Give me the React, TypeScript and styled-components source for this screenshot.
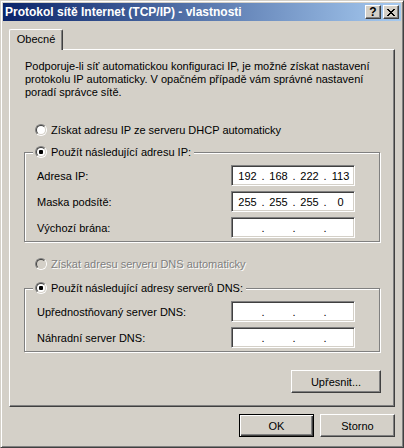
import React from "react";
import styled, { createGlobalStyle } from "styled-components";

const GlobalStyle = createGlobalStyle`
  html, body { margin: 0; padding: 0; background: #d4d0c8; }
  body {
    font-family: "Liberation Sans", Arial, sans-serif;
    font-size: 11px;
    color: #000;
  }
  * { box-sizing: border-box; }
`;

const Window = styled.div`
  width: 404px;
  height: 448px;
  display: flex;
  flex-direction: column;
  background: #d4d0c8;
  border: 1px solid;
  border-color: #d4d0c8 #404040 #404040 #d4d0c8;
  box-shadow: inset 1px 1px 0 #fff, inset -1px -1px 0 #808080;
  padding: 2px;
`;

const TitleBar = styled.div`
  height: 18px;
  display: flex;
  align-items: center;
  gap: 2px;
  padding: 0 2px 0 2px;
  background: linear-gradient(to right, #0a246a 0%, #a6caf0 100%);
`;

const Title = styled.div`
  flex: 1;
  color: #fff;
  font-weight: bold;
  font-size: 12px;
  white-space: nowrap;
  line-height: 18px;
`;

const CaptionButton = styled.div`
  width: 16px;
  height: 14px;
  display: flex;
  align-items: center;
  justify-content: center;
  background: #d4d0c8;
  border: 1px solid;
  border-color: #fff #404040 #404040 #fff;
  box-shadow: inset -1px -1px 0 #808080;
  font-weight: bold;
  font-size: 12px;
  line-height: 12px;
  color: #000;
`;

const Body = styled.div`
  flex: 1;
  display: flex;
  flex-direction: column;
  padding: 8px 6px 0 6px;
`;

const TabStrip = styled.div`
  display: flex;
`;

const Tab = styled.div`
  position: relative;
  z-index: 1;
  width: 54px;
  height: 21px;
  margin-bottom: -1px;
  display: flex;
  align-items: center;
  justify-content: center;
  padding-bottom: 2px;
  background: #d4d0c8;
  border-top: 1px solid #fff;
  border-left: 1px solid #fff;
  border-right: 1px solid #404040;
  border-radius: 2px 2px 0 0;
  box-shadow: inset -1px 0 0 #808080;
`;

const Panel = styled.div`
  display: flex;
  flex-direction: column;
  border: 1px solid;
  border-color: #fff #404040 #404040 #fff;
  box-shadow: inset -1px -1px 0 #808080;
  padding: 10px 13px 13px 14px;
`;

const Paragraph = styled.p`
  margin: 0 0 0 1px;
  line-height: 13px;
`;

const RadioRow = styled.div<{ $top: number; $disabled?: boolean }>`
  display: flex;
  align-items: center;
  height: 14px;
  margin-top: ${(p) => p.$top}px;
  margin-left: 11px;
  color: ${(p) => (p.$disabled ? "#808080" : "#000")};
  text-shadow: ${(p) => (p.$disabled ? "1px 1px 0 #fff" : "none")};
`;

const RadioOuter = styled.span`
  width: 12px;
  height: 12px;
  margin-right: 4px;
  flex: none;
  border-radius: 50%;
  border: 1px solid;
  border-color: #808080 #fff #fff #808080;
  display: flex;
`;

const RadioInner = styled.span<{ $disabled?: boolean }>`
  flex: 1;
  border-radius: 50%;
  border: 1px solid;
  border-color: #404040 #d4d0c8 #d4d0c8 #404040;
  background: ${(p) => (p.$disabled ? "#d4d0c8" : "#fff")};
  display: flex;
  align-items: center;
  justify-content: center;
`;

const RadioDot = styled.span`
  width: 4px;
  height: 4px;
  border-radius: 1px;
  background: #000;
`;

const Group = styled.div<{ $top: number }>`
  position: relative;
  margin-top: ${(p) => p.$top}px;
  margin-right: 1px;
  border: 1px solid #808080;
  box-shadow: 1px 1px 0 #fff, inset 1px 1px 0 #fff;
  padding: 12px 24px 3px 12px;
  display: flex;
  flex-direction: column;
  gap: 5px;
`;

const Legend = styled.div`
  position: absolute;
  top: -8px;
  left: 8px;
  height: 14px;
  display: flex;
  align-items: center;
  padding: 0 3px 0 2px;
  background: #d4d0c8;
`;

const FieldRow = styled.div`
  display: flex;
  align-items: center;
  height: 21px;
`;

const Label = styled.span`
  flex: 1;
`;

const IpBox = styled.div`
  width: 124px;
  height: 21px;
  display: flex;
  align-items: center;
  padding-left: 3px;
  overflow: hidden;
  background: #fff;
  border: 1px solid;
  border-color: #808080 #fff #fff #808080;
  box-shadow: inset 1px 1px 0 #404040, inset -1px -1px 0 #d4d0c8;
`;

const Octet = styled.span`
  width: 25px;
  flex: none;
  text-align: center;
`;

const Dot = styled.span`
  width: 6px;
  flex: none;
  text-align: center;
`;

const Button = styled.div<{ $width: number; $default?: boolean }>`
  width: ${(p) => p.$width}px;
  height: 23px;
  display: flex;
  align-items: center;
  justify-content: center;
  background: #d4d0c8;
  border: 1px solid;
  border-color: ${(p) => (p.$default ? "#000" : "#fff #404040 #404040 #fff")};
  box-shadow: ${(p) =>
    p.$default
      ? "inset 1px 1px 0 #fff, inset -1px -1px 0 #404040, inset -2px -2px 0 #808080"
      : "inset -1px -1px 0 #808080"};
`;

const AdvancedButton = styled(Button)`
  align-self: flex-end;
  margin-top: 18px;
`;

const ButtonRow = styled.div`
  display: flex;
  justify-content: flex-end;
  gap: 6px;
  margin-top: 7px;
`;

function Radio({ checked, disabled }: { checked?: boolean; disabled?: boolean }) {
  return (
    <RadioOuter>
      <RadioInner $disabled={disabled}>{checked && <RadioDot />}</RadioInner>
    </RadioOuter>
  );
}

function IpField({ value }: { value?: string[] }) {
  const parts = value ?? ["", "", "", ""];
  return (
    <IpBox>
      {parts.map((p, i) => (
        <React.Fragment key={i}>
          <Octet>{p}</Octet>
          {i < 3 && <Dot>.</Dot>}
        </React.Fragment>
      ))}
    </IpBox>
  );
}

function CloseGlyph() {
  const px: [number, number][] = [
    [0, 0], [1, 0], [6, 0], [7, 0],
    [1, 1], [2, 1], [5, 1], [6, 1],
    [2, 2], [3, 2], [4, 2], [5, 2],
    [3, 3], [4, 3],
    [2, 4], [3, 4], [4, 4], [5, 4],
    [1, 5], [2, 5], [5, 5], [6, 5],
    [0, 6], [1, 6], [6, 6], [7, 6],
  ];
  const d = px.map(([x, y]) => `M${x} ${y}h1v1h-1z`).join("");
  return (
    <svg width="8" height="7" viewBox="0 0 8 7" shapeRendering="crispEdges">
      <path d={d} fill="#000" />
    </svg>
  );
}

export default function App() {
  return (
    <>
      <GlobalStyle />
      <Window>
        <TitleBar>
          <Title>Protokol sítě Internet (TCP/IP) - vlastnosti</Title>
          <CaptionButton>?</CaptionButton>
          <CaptionButton>
            <CloseGlyph />
          </CaptionButton>
        </TitleBar>
        <Body>
          <TabStrip>
            <Tab>Obecné</Tab>
          </TabStrip>
          <Panel>
            <Paragraph>
              Podporuje-li síť automatickou konfiguraci IP, je možné získat nastavení
              <br />
              protokolu IP automaticky. V opačném případě vám správné nastavení
              <br />
              poradí správce sítě.
            </Paragraph>
            <RadioRow $top={24}>
              <Radio />
              Získat adresu IP ze serveru DHCP automaticky
            </RadioRow>
            <Group $top={15}>
              <Legend>
                <Radio checked />
                Použít následující adresu IP:
              </Legend>
              <FieldRow>
                <Label>Adresa IP:</Label>
                <IpField value={["192", "168", "222", "113"]} />
              </FieldRow>
              <FieldRow>
                <Label>Maska podsítě:</Label>
                <IpField value={["255", "255", "255", "0"]} />
              </FieldRow>
              <FieldRow>
                <Label>Výchozí brána:</Label>
                <IpField />
              </FieldRow>
            </Group>
            <RadioRow $top={15} $disabled>
              <Radio disabled />
              Získat adresu serveru DNS automaticky
            </RadioRow>
            <Group $top={17}>
              <Legend>
                <Radio checked />
                Použít následující adresy serverů DNS:
              </Legend>
              <FieldRow>
                <Label>Upřednostňovaný server DNS:</Label>
                <IpField />
              </FieldRow>
              <FieldRow>
                <Label>Náhradní server DNS:</Label>
                <IpField />
              </FieldRow>
            </Group>
            <AdvancedButton $width={90}>Upřesnit...</AdvancedButton>
          </Panel>
          <ButtonRow>
            <Button $width={75} $default>
              OK
            </Button>
            <Button $width={75}>Storno</Button>
          </ButtonRow>
        </Body>
      </Window>
    </>
  );
}
